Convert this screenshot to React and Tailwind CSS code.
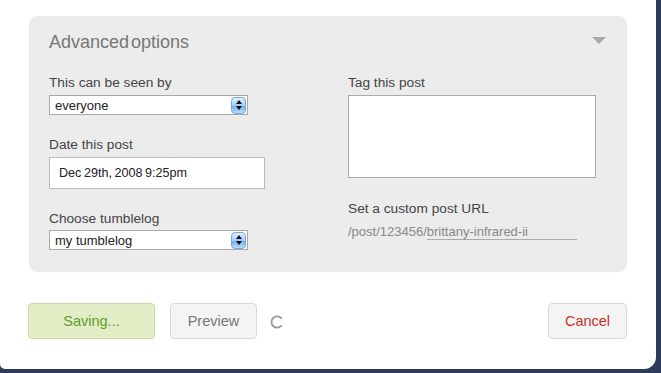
const font = { fontFamily: '"Liberation Sans", Arial, sans-serif' };

const SelectBox = ({ value }) => (
  <div className="flex items-center justify-between w-[199px] h-[20px] bg-white border border-[#a9a9a9] pl-[5px] pr-[1px]">
    <span className="pt-[2px] text-[13px] leading-[16px] text-[#222]">{value}</span>
    <div className="flex flex-col items-center justify-center gap-[2px] w-[15px] h-[17px] rounded-[4px] border border-[#7ba6d6] bg-[linear-gradient(#e0f0fe,#a2cdf7_50%,#72b0ee_55%,#b9defc)]">
      <div className="w-0 h-0 border-l-[3px] border-r-[3px] border-b-[4px] border-l-transparent border-r-transparent border-b-[#111]" />
      <div className="w-0 h-0 border-l-[3px] border-r-[3px] border-t-[4px] border-l-transparent border-r-transparent border-t-[#111]" />
    </div>
  </div>
);

const Label = ({ children }) => (
  <div className="h-[16px] text-[13.7px] leading-[16px] text-[#444]">{children}</div>
);

export default function App() {
  return (
    <div className="w-[661px] h-[373px] bg-[#2d3c5b] overflow-hidden" style={font}>
      <div className="w-[656px] h-[369px] bg-white rounded-br-[12px] rounded-bl-[5px] pt-[16px] pl-[29px]">
        {/* Advanced options */}
        <div className="w-[598px] h-[255px] rounded-[8px] bg-[#ececec] shadow-[0_1px_1px_rgba(0,0,0,0.08)] pt-[16px] pl-[20px] pr-[21px]">
          <div className="flex justify-between">
            <h2 className="h-[20px] text-[18px] leading-[20px] text-[#777] [word-spacing:-3px]">
              Advanced options
            </h2>
            <div className="mt-[5px] w-0 h-0 border-l-[7px] border-r-[7px] border-t-[7px] border-l-transparent border-r-transparent border-t-[#aaa]" />
          </div>

          <div className="flex mt-[23px]">
            {/* left column */}
            <div className="w-[216px]">
              <Label>This can be seen by</Label>
              <div className="mt-[4px]">
                <SelectBox value="everyone" />
              </div>

              <div className="mt-[22px]">
                <Label>Date this post</Label>
              </div>
              <div className="mt-[4px] w-[216px] h-[32px] bg-white border border-[#bbb] pl-[9px] flex items-center">
                <span className="text-[12.6px] text-[#222] [word-spacing:-1px]">
                  Dec 29th, 2008 9:25pm
                </span>
              </div>

              <div className="mt-[22px]">
                <Label>Choose tumblelog</Label>
              </div>
              <div className="mt-[3px]">
                <SelectBox value="my tumblelog" />
              </div>
            </div>

            {/* right column */}
            <div className="ml-[83px] w-[248px]">
              <Label>Tag this post</Label>
              <div className="mt-[4px] w-[248px] h-[83px] bg-white border border-[#aaa]" />

              <div className="mt-[23px]">
                <Label>Set a custom post URL</Label>
              </div>
              <div className="flex mt-[7px] text-[13px] leading-[15px] text-[#888]">
                <span>/post/123456/</span>
                <span className="w-[150px] h-[16px] border-b border-[#aaa]">brittany-infrared-ii</span>
              </div>
            </div>
          </div>
        </div>

        {/* buttons */}
        <div className="flex items-center w-[599px] mt-[32px] -ml-[1px]">
          <button className="w-[127px] h-[36px] pt-[2px] rounded-[4px] bg-[#e3eec7] border border-[#c9d9a1] text-[14.5px] text-[#5f9b2a]">
            Saving...
          </button>
          <button className="ml-[15px] w-[87px] h-[36px] pt-[2px] rounded-[4px] bg-[#f4f4f4] border border-[#d9d9d9] text-[14.5px] text-[#777]">
            Preview
          </button>
          <svg className="ml-[13px] mt-[2px]" width="14" height="14" viewBox="0 0 14 14">
            <path
              d="M11.2 3.2 A5.6 5.6 0 1 0 11.2 10.8"
              fill="none"
              stroke="#999"
              strokeWidth="1.8"
              strokeLinecap="round"
            />
          </svg>
          <button className="ml-auto w-[79px] h-[36px] pt-[2px] rounded-[4px] bg-[#f4f4f4] border border-[#d9d9d9] text-[14.5px] text-[#c8312a]">
            Cancel
          </button>
        </div>
      </div>
    </div>
  );
}
